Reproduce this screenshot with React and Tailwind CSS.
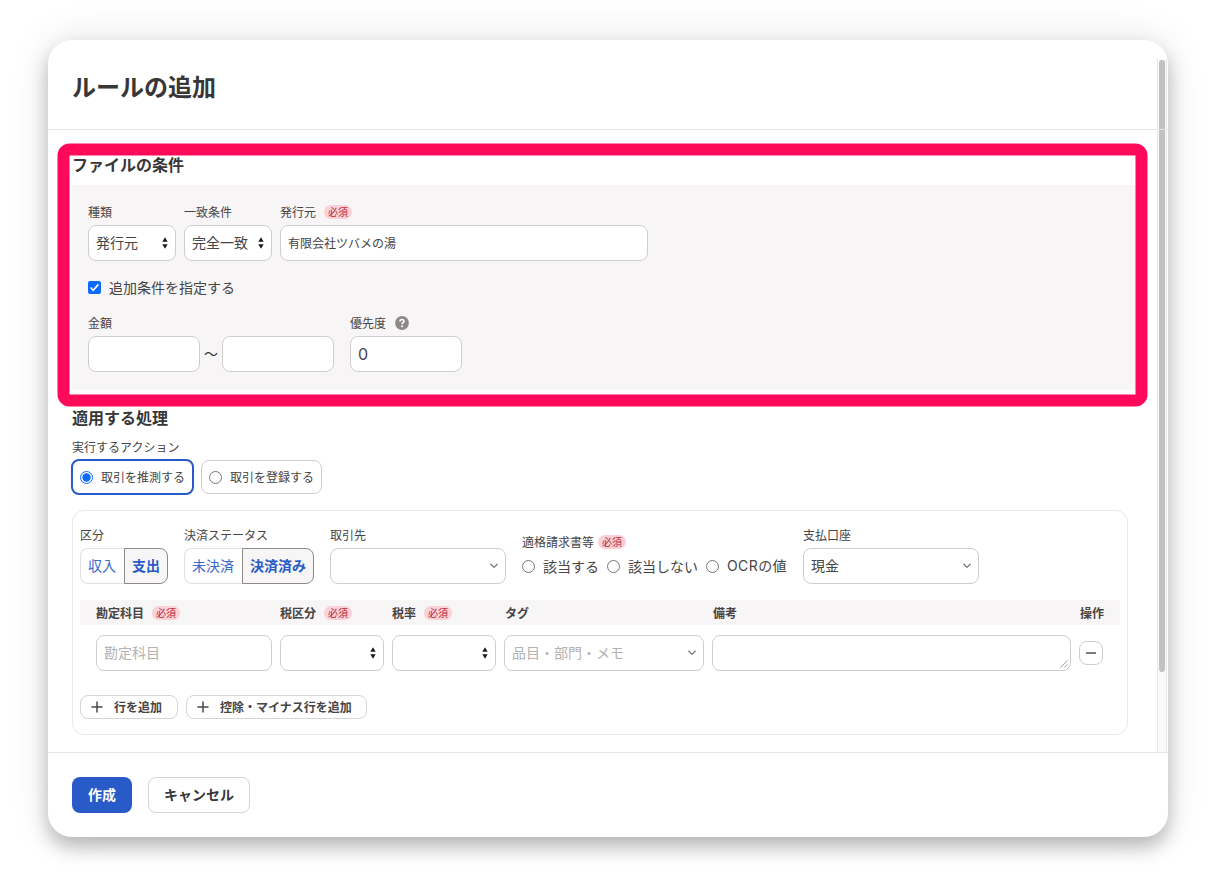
import { useState } from "react";

const fieldBox = "h-9 rounded-lg border border-[#d0cdcd] bg-white px-[7px] flex items-center";

const Required = () => (
  <span className="h-[14px] px-1 rounded-full bg-[#fad1d7] text-[#b5283d] text-[10px] leading-[14px] font-normal">必須</span>
);

const Stepper = () => (
  <svg width="6" height="12" viewBox="0 0 6 12" className="shrink-0" fill="#1c1c1c">
    <path d="M3 0.3 5.7 4.8H0.3zM3 11.7 0.3 7.2h5.4z" />
  </svg>
);

const Chevron = () => (
  <svg width="8" height="6" viewBox="0 0 8 6" className="shrink-0" fill="none" stroke="#7d7a7a" strokeWidth="1.3" strokeLinecap="round" strokeLinejoin="round">
    <path d="M0.8 1.2 4 4.4 7.2 1.2" />
  </svg>
);

const Plus = () => (
  <svg width="12" height="12" viewBox="0 0 12 12" fill="none" stroke="#4a4a4a" strokeWidth="1.5" strokeLinecap="round">
    <path d="M6 1v10M1 6h10" />
  </svg>
);

const Radio = ({ checked }) => (
  <svg width="13" height="13" viewBox="0 0 13 13" className="shrink-0">
    <circle cx="6.5" cy="6.5" r="6" fill="#fff" stroke={checked ? "#0a6cff" : "#767676"} />
    {checked && <circle cx="6.5" cy="6.5" r="4.2" fill="#0a6cff" />}
  </svg>
);

const Field = ({ label, required, className = "", children }) => (
  <div className={className}>
    <div className="flex items-center gap-2 h-[18px] mb-1 leading-[18px]">
      <span>{label}</span>
      {required && <Required />}
    </div>
    {children}
  </div>
);

const Segment = ({ options, value, onChange }) => (
  <div className="flex h-9 text-sm text-[#285ac8]">
    {options.map((o, i) => (
      <button
        key={o}
        onClick={() => onChange(o)}
        className={`pl-[7px] pb-0.5 border ${i === 0 ? "rounded-l-lg" : "rounded-r-lg"} ${
          value === o
            ? "bg-[#f7f5f5] border-[#8c8989] font-bold pr-[7px]"
            : "bg-white border-[#e1dfdf] border-r-0 pr-2 text-[#3c69cd]"
        }`}
      >
        {o}
      </button>
    ))}
  </div>
);

const App = () => {
  const [action, setAction] = useState("取引を推測する");
  const [kind, setKind] = useState("支出");
  const [status, setStatus] = useState("決済済み");
  const [invoice, setInvoice] = useState("");

  return (
    <div className="w-[1216px] h-[893px] bg-white pt-10 pl-12 overflow-hidden font-['Noto_Sans_CJK_JP',sans-serif] text-[#464444] text-xs">
      <div className="relative w-[1120px] h-[797px] flex flex-col bg-white rounded-[24px] shadow-[0_10px_18px_rgba(0,0,0,0.24),0_0_40px_rgba(0,0,0,0.11)]">
        {/* Header */}
        <div className="h-[90px] shrink-0 border-b border-[#e6e4e4] px-6 pt-7">
          <h1 className="text-2xl leading-9 font-bold text-[#383636]">ルールの追加</h1>
        </div>

        {/* Body */}
        <div className="h-[622px] shrink-0 px-6 pt-[22px]">
          <h2 className="text-base leading-6 font-bold mb-[9px] text-[#383636]">ファイルの条件</h2>

          <div className="h-[205px] bg-[#f7f5f6] px-4 pt-[18px]">
            <div className="flex gap-2">
              <Field label="種類" className="w-[88px]">
                <div className={`${fieldBox} justify-between text-sm`}><span className="pb-0.5">発行元</span><Stepper /></div>
              </Field>
              <Field label="一致条件" className="w-[88px]">
                <div className={`${fieldBox} justify-between text-sm`}><span className="pb-0.5">完全一致</span><Stepper /></div>
              </Field>
              <Field label="発行元" required className="w-[368px]">
                <div className={fieldBox}>有限会社ツバメの湯</div>
              </Field>
            </div>

            <div className="flex items-center mt-4 h-5 text-sm leading-5">
              <svg width="13" height="13" viewBox="0 0 13 13" className="mr-2">
                <rect width="13" height="13" rx="2" fill="#0a6cff" />
                <path d="M2.6 6.5 5.2 9.2 10.4 3.4" fill="none" stroke="#fff" strokeWidth="1.6" />
              </svg>
              追加条件を指定する
            </div>

            <div className="flex mt-[17px]">
              <Field label="金額">
                <div className="flex items-center">
                  <div className={`${fieldBox} w-28`} />
                  <span className="w-[22px] pb-[3px] text-center text-sm text-[#323232]">〜</span>
                  <div className={`${fieldBox} w-28`} />
                </div>
              </Field>
              <div className="ml-4">
                <div className="flex items-center h-[18px] mb-1">
                  優先度
                  <svg width="14" height="14" viewBox="0 0 14 14" className="ml-[9px]">
                    <circle cx="7" cy="7" r="6.9" fill="#8c8989" />
                    <path d="M5 5.5C5 4.3 5.8 3.5 7 3.5s2 .7 2 1.8C9 6.6 7.1 6.7 7.1 8.2" fill="none" stroke="#fff" strokeWidth="1.6" />
                    <circle cx="7.1" cy="10.3" r="1" fill="#fff" />
                  </svg>
                </div>
                <div className={`${fieldBox} w-28 text-base font-[Inter]`}>0</div>
              </div>
            </div>
          </div>

          <h2 className="text-base leading-6 font-bold mt-[15px] text-[#383636]">適用する処理</h2>
          <div className="mt-[9px] leading-[18px]">実行するアクション</div>
          <div className="flex items-center gap-[7px] mt-[3px] -ml-px h-9">
            {["取引を推測する", "取引を登録する"].map((name) => (
              <button
                key={name}
                onClick={() => setAction(name)}
                className={`flex items-center gap-2 rounded-lg pl-[7px] ${
                  action === name ? "h-9 w-[123px] border-2 border-[#285ac8]" : "h-[34px] w-[121px] border border-[#d0cdcd]"
                }`}
              >
                <Radio checked={action === name} />
                {name}
              </button>
            ))}
          </div>

          {/* Transaction panel */}
          <div className="w-[1056px] h-[225px] mt-[15px] border border-[#e9e7e7] rounded-xl px-[7px] pt-[15px]">
            <div className="flex">
              <Field label="区分">
                <Segment options={["収入", "支出"]} value={kind} onChange={setKind} />
              </Field>
              <Field label="決済ステータス" className="ml-4">
                <Segment options={["未決済", "決済済み"]} value={status} onChange={setStatus} />
              </Field>
              <Field label="取引先" className="ml-4 w-44">
                <div className={`${fieldBox} justify-end`}><Chevron /></div>
              </Field>
              <div className="ml-4 pt-[7px] w-[265px] whitespace-nowrap">
                <div className="flex items-center gap-1 h-[18px]">適格請求書等<Required /></div>
                <div className="flex gap-2 mt-[5px] h-5 text-sm leading-5">
                  {["該当する", "該当しない", "OCRの値"].map((o) => (
                    <label key={o} className="flex items-center gap-2" onClick={() => setInvoice(o)}>
                      <Radio checked={invoice === o} />
                      <span className={o === "OCRの値" ? "font-[Inter,'Noto_Sans_CJK_JP',sans-serif] tracking-[0.4px]" : ""}>{o}</span>
                    </label>
                  ))}
                </div>
              </div>
              <Field label="支払口座" className="ml-4 w-44">
                <div className={`${fieldBox} justify-between text-sm`}><span className="pb-0.5">現金</span><Chevron /></div>
              </Field>
            </div>

            {/* Detail rows */}
            <div className="grid grid-cols-[184px_112px_112px_208px_367px_auto] items-center mt-4 h-[25px] pl-4 bg-[#f7f5f6] font-bold">
              <div className="flex items-center gap-2">勘定科目<Required /></div>
              <div className="flex items-center gap-2">税区分<Required /></div>
              <div className="flex items-center gap-2">税率<Required /></div>
              <div className="pl-px">タグ</div>
              <div className="pl-px">備考</div>
              <div className="pl-px">操作</div>
            </div>
            <div className="flex items-center gap-2 mt-[10px] pl-4 text-sm text-[#b4b1b1]">
              <div className={`${fieldBox} w-44`}><span className="pb-0.5">勘定科目</span></div>
              <div className={`${fieldBox} w-[104px] justify-end`}><Stepper /></div>
              <div className={`${fieldBox} w-[104px] justify-end`}><Stepper /></div>
              <div className={`${fieldBox} w-[200px] justify-between`}><span className="pb-0.5">品目・部門・メモ</span><Chevron /></div>
              <div className="h-9 w-[359px] rounded-lg border border-[#d0cdcd] flex items-end justify-end p-[2px]">
                <svg width="8" height="8" viewBox="0 0 8 8" stroke="#8a8a8a" strokeWidth="0.7">
                  <path d="M0.3 7.7 7.7 0.3M4.3 7.7 7.7 4.3" />
                </svg>
              </div>
              <button className="w-6 h-6 rounded-lg border border-[#d0cdcd] flex items-center justify-center">
                <svg width="10" height="2" viewBox="0 0 10 2"><rect width="10" height="2" rx="0.5" fill="#7d7a7a" /></svg>
              </button>
            </div>

            <div className="flex gap-2 mt-6 font-bold">
              <button className="flex items-center h-6 w-[98px] pl-[10px] gap-[11px] rounded-lg border border-[#d7d4d4]"><Plus />行を追加</button>
              <button className="flex items-center h-6 w-[181px] pl-[10px] gap-[11px] rounded-lg border border-[#d7d4d4]"><Plus />控除・マイナス行を追加</button>
            </div>
          </div>
        </div>

        {/* Footer */}
        <div className="flex-1 flex gap-4 border-t border-[#e6e4e4] px-6 pt-6 text-sm font-bold">
          <button className="h-9 w-[60px] pb-0.5 rounded-lg bg-[#285ac8] text-white">作成</button>
          <button className="h-9 w-[102px] pb-0.5 rounded-lg border border-[#d7d4d4] text-[#383636]">キャンセル</button>
        </div>

        {/* Scrollbar */}
        <div className="absolute right-px top-[19px] w-[10px] h-[693px] border-x border-[#e8e8e8] bg-[#fafafa]">
          <div className="ml-px mt-px w-[6px] h-[612px] rounded-full bg-[#c1c1c1]" />
        </div>
        <div className="absolute right-0 top-[89px] w-[11px] h-px bg-[#e6e4e4]" />

        {/* Highlight frame */}
        <div className="absolute left-[10px] top-[104px] w-[1090px] h-[263px] -translate-x-[0.5px] -translate-y-[0.5px] rounded-xl border-[12px] border-[#ff0a5a] pointer-events-none" />
      </div>
    </div>
  );
};

export default App;
